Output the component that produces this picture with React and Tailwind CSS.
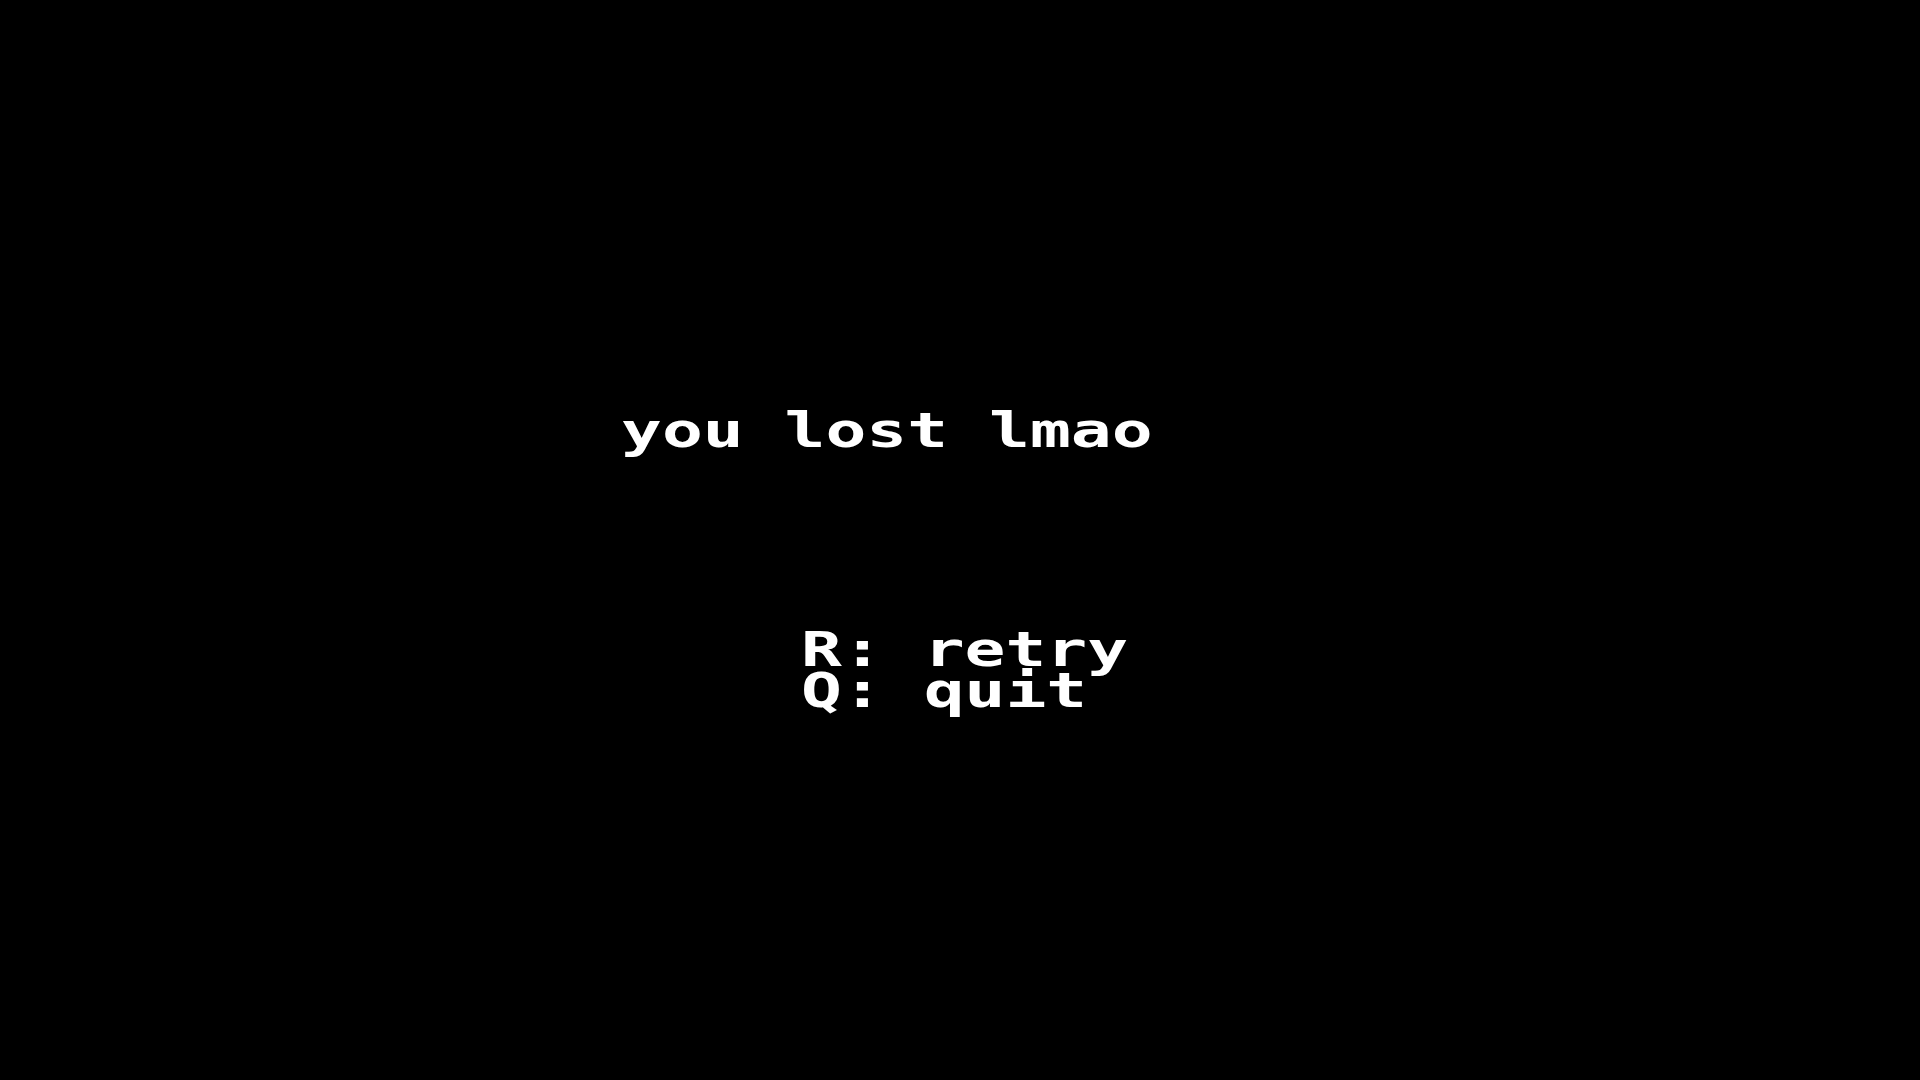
export default function App() {
  return (
    <div className="w-[1920px] h-[1080px] bg-black overflow-hidden text-white font-bold">
      <div className="pt-[406px] pl-[621px] font-['DejaVu_Sans_Mono',monospace] text-[48px] whitespace-pre">
        <div className="leading-[48px] origin-left scale-x-[1.415]">you lost lmao</div>
        <div className="mt-[175px] ml-[180px] leading-[41px] origin-left scale-x-[1.415]">
          <div>R: retry</div>
          <div>Q: quit</div>
        </div>
      </div>
    </div>
  );
}
